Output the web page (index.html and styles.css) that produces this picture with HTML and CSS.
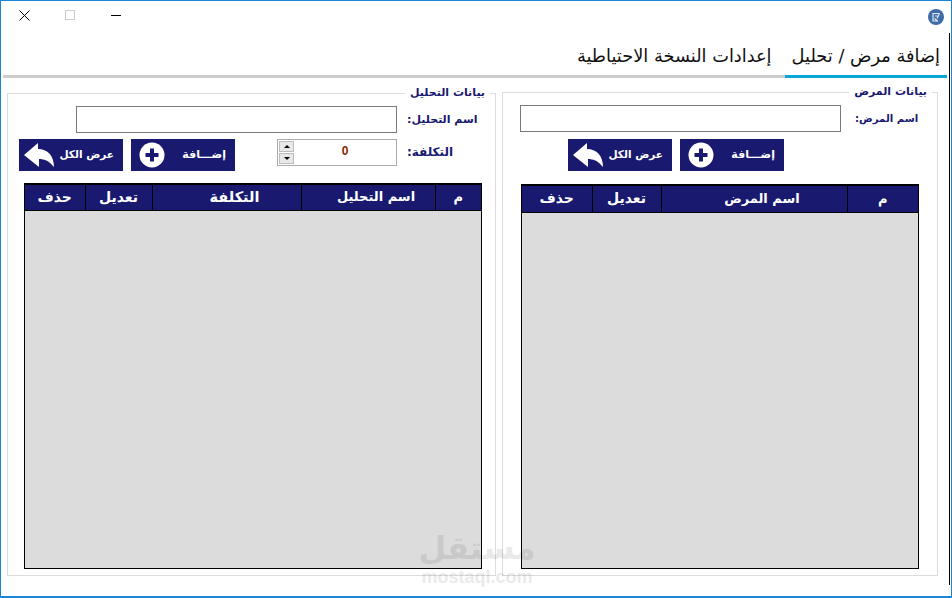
FILE: index.html
```html
<!DOCTYPE html>
<html lang="ar" dir="rtl">
<head>
<meta charset="utf-8">
<title>إضافة مرض / تحليل</title>
<link rel="stylesheet" href="styles.css">
</head>
<body>
<div class="window">
  <header class="titlebar">
    <svg class="app-icon" width="16" height="16" viewBox="0 0 16 16" aria-hidden="true">
      <circle cx="8" cy="8" r="8" fill="#3e6ca6"/>
      <path d="M4.5 4.5h7M5 4.500v7.500h5M11.500 4.500l-2.500 5M7 7h2.500M6.500 9.500l3.500 3" fill="none" stroke="#dfe7f2" stroke-width="1.200"/>
    </svg>
    <div class="controls">
      <button class="ctl" aria-label="تصغير"><svg width="11" height="11" viewBox="0 0 11 11"><path d="M0 5.500h10" stroke="#000" fill="none"/></svg></button>
      <button class="ctl" aria-label="تكبير"><svg width="11" height="11" viewBox="0 0 11 11"><rect x=".5" y=".5" width="9" height="9" fill="none" stroke="#ccc"/></svg></button>
      <button class="ctl" aria-label="إغلاق"><svg width="11" height="11" viewBox="0 0 11 11"><path d="M.5.500l10 10M10.500.500l-10 10" stroke="#000" fill="none"/></svg></button>
    </div>
  </header>

  <main class="main">
    <nav class="tabs">
      <a class="tab tab-active">إضافة مرض / تحليل</a>
      <a class="tab">إعدادات النسخة الاحتياطية</a>
    </nav>

    <div class="panels">
      <section class="group group-disease">
        <h2 class="legend">بيانات المرض</h2>
        <div class="row row-name">
          <label class="label">اسم المرض:</label>
          <input class="input" type="text">
        </div>
        <div class="actions">
          <button class="btn btn-add"><span>إضـــافة</span>
            <svg width="26" height="26" viewBox="0 0 26 26"><circle cx="13" cy="13" r="12.500" fill="#fff"/><path d="M13 6.500v13M6.500 13h13" stroke="#191970" stroke-width="4" fill="none"/></svg>
          </button>
          <button class="btn btn-all"><span>عرض الكل</span>
            <svg width="32" height="26" viewBox="0 0 32 26"><path d="M1 13 15 1v6c9 0 16 6 16 18l-2-2c-3-4-8-6-13-6v8z" fill="#fff"/></svg>
          </button>
        </div>
        <div class="grid">
          <table class="table">
            <thead>
              <tr><th class="c-d1">م</th><th class="c-name">اسم المرض</th><th class="c-d3 c-short">تعديل</th><th class="c-short">حذف</th></tr>
            </thead>
          </table>
        </div>
      </section>

      <section class="group group-test">
        <h2 class="legend">بيانات التحليل</h2>
        <div class="row row-name">
          <label class="label">اسم التحليل:</label>
          <input class="input" type="text">
        </div>
        <div class="row row-cost">
          <label class="label label-fixed">التكلفة:</label>
          <div class="spin">
            <input class="spin-value" type="text" value="0">
            <div class="spin-btns">
              <span class="spin-btn"><i class="tri tri-up"></i></span>
              <span class="spin-btn"><i class="tri tri-down"></i></span>
            </div>
          </div>
          <div class="actions actions-end">
            <button class="btn btn-add"><span>إضـــافة</span>
              <svg width="26" height="26" viewBox="0 0 26 26"><circle cx="13" cy="13" r="12.500" fill="#fff"/><path d="M13 6.500v13M6.500 13h13" stroke="#191970" stroke-width="4" fill="none"/></svg>
            </button>
            <button class="btn btn-all"><span>عرض الكل</span>
              <svg width="32" height="26" viewBox="0 0 32 26"><path d="M1 13 15 1v6c9 0 16 6 16 18l-2-2c-3-4-8-6-13-6v8z" fill="#fff"/></svg>
            </button>
          </div>
        </div>
        <div class="grid">
          <table class="table">
            <thead>
              <tr><th class="c-t1">م</th><th class="c-t2 c-name">اسم التحليل</th><th class="c-t3 c-name c-cost">التكلفة</th><th class="c-t4 c-short">تعديل</th><th class="c-short">حذف</th></tr>
            </thead>
          </table>
        </div>
      </section>
    </div>
  </main>

  <div class="watermark" aria-hidden="true">
    <span class="wm-ar">مستقل</span>
    <span class="wm-en">mostaql.com</span>
  </div>
</div>
</body>
</html>
```

FILE: styles.css
```css
* { box-sizing: border-box; }
html, body { margin: 0; padding: 0; background: #fff; }
body { font-family: "DejaVu Sans", sans-serif; color: #191970; }

.window {
  position: relative;
  width: 952px;
  height: 598px;
  border: 1px solid #1a86d8;
  border-bottom-width: 2px;
  background: #fff;
  display: flex;
  flex-direction: column;
  overflow: hidden;
}

.titlebar {
  height: 32px;
  display: flex;
  align-items: center;
  justify-content: space-between;
  padding: 0 7px 4px 0;
  flex: none;
}
.app-icon { display: block; margin-top: 3px; }
.controls { display: flex; }
.ctl {
  width: 46px;
  height: 28px;
  border: 0;
  padding: 0;
  background: none;
  display: flex;
  align-items: center;
  justify-content: center;
}
.ctl svg { display: block; }

.main {
  width: 949px;
  height: 552px;
  flex: none;
  align-self: flex-end;
  border-right: 1px solid #000;
}

.tabs {
  height: 45px;
  margin: 0 2px;
  border-bottom: 3px solid #cdcdcd;
  display: flex;
  align-items: stretch;
  color: #111;
}
.tab {
  font-size: 17.8px;
  line-height: 45px;
  height: 45px;
  white-space: nowrap;
  padding: 0 7px;
}
.tab + .tab { margin-right: 6px; }
.tab-active { border-bottom: 3px solid #0aa6d8; }

.panels {
  display: flex;
  gap: 6px;
  padding: 0 11px 0 6px;
  height: 498px;
}

.group {
  position: relative;
  border: 1px solid #dcdcdc;
  display: flex;
  flex-direction: column;
}
.group-disease {
  width: 436px;
  margin-top: 14px;
  padding: 12px 18px 6px 17px;
}
.group-test {
  width: 489px;
  margin-top: 15px;
  padding: 12px 13px 6px 11px;
}

.legend {
  position: absolute;
  top: -7px;
  right: 5px;
  margin: 0;
  padding: 0 5px;
  background: #fff;
  font-size: 11px;
  line-height: 12px;
  font-weight: bold;
}

.row { display: flex; align-items: center; gap: 10px; }
.label { font-size: 11px; font-weight: bold; white-space: nowrap; min-width: 0; }
.row-name .label { flex: 1; text-align: left; }
.group-test .row-name { margin-left: 57px; }
.group-disease .row-name { gap: 14px; }
.group-disease .label { font-size: 10.200px; }
.label-fixed { width: 75px; text-align: left; flex: none; font-size: 12px; }

.input {
  width: 321px;
  height: 27px;
  border: 1px solid #7a7a7a;
  background: #fff;
  flex: none;
  padding: 0;
  outline: 0;
}

.row-cost { margin-top: 6px; align-items: flex-start; }
.row-cost .label { margin-top: 6px; }

.spin {
  width: 120px;
  height: 27px;
  border: 1px solid #ababab;
  display: flex;
  flex: none;
}
.spin-value {
  flex: 1;
  min-width: 0;
  border: 0;
  padding: 0 0 4px;
  outline: 0;
  background: none;
  text-align: center;
  font: bold 12px "Liberation Sans", sans-serif;
  color: #8a1f00;
}
.spin-btns {
  width: 15px;
  margin: 1px 0 1px 1px;
  display: flex;
  flex-direction: column;
  gap: 1px;
  flex: none;
}
.spin-btn {
  flex: 1;
  background: #e8e8e8;
  border: 1px solid #bcbcbc;
  display: flex;
  align-items: center;
  justify-content: center;
}
.tri { width: 0; height: 0; border-left: 3px solid transparent; border-right: 3px solid transparent; }
.tri-up { border-bottom: 3px solid #000; }
.tri-down { border-top: 3px solid #000; }

.actions { display: flex; gap: 8px; }
.group-disease .actions { margin: 7px 135px 0 0; }
.row-cost .actions-end { margin-right: auto; }

.btn {
  width: 104px;
  height: 32px;
  border: 0;
  background: #191970;
  color: #fff;
  font: bold 10.500px "DejaVu Sans", sans-serif;
  display: flex;
  align-items: center;
  justify-content: space-between;
  padding: 0 9px 0 8px;
  white-space: nowrap;
}
.btn svg { display: block; flex: none; }
.btn-all { padding-left: 4px; }
.btn span { padding-bottom: 2px; }
.btn-add span { font-size: 11px; }

.grid {
  flex: 1;
  min-height: 0;
  margin-top: 12px;
  background: #dcdcdc;
  border: 1px solid #000;
}
.group-disease .grid { margin: 13px 0 0 1px; }
.group-test .grid { margin-left: 5px; }

.table {
  width: 100%;
  border-collapse: collapse;
  table-layout: fixed;
}
.table th {
  height: 27px;
  padding: 0 0 2px;
  background: #191970;
  color: #fff;
  font-size: 13px;
  font-weight: bold;
  border: 1px solid #000;
}
.group-test .table th { height: 26px; }
.table th:first-child { border-right: 0; }
.table th:last-child { border-left: 0; }
.table th.c-name { padding-left: 16px; }
.table th.c-cost { font-size: 14.500px; }
.table th.c-short { font-size: 14px; }

.c-d1 { width: 71px; }
.c-d3 { width: 69px; }
.table th.c-d3 + th { width: 70px; }
.c-t1 { width: 46px; }
.c-t2 { width: 134px; }
.c-t3 { width: 149px; }
.c-t4 { width: 67px; }

.watermark {
  position: absolute;
  left: 409px;
  top: 529px;
  width: 134px;
  display: flex;
  flex-direction: column;
  align-items: center;
  color: #000;
  opacity: .08;
  font-weight: bold;
  pointer-events: none;
}
.wm-ar { font-size: 32px; line-height: 37px; }
.wm-en { font-family: "Liberation Sans", sans-serif; font-size: 18px; line-height: 21px; }
```
